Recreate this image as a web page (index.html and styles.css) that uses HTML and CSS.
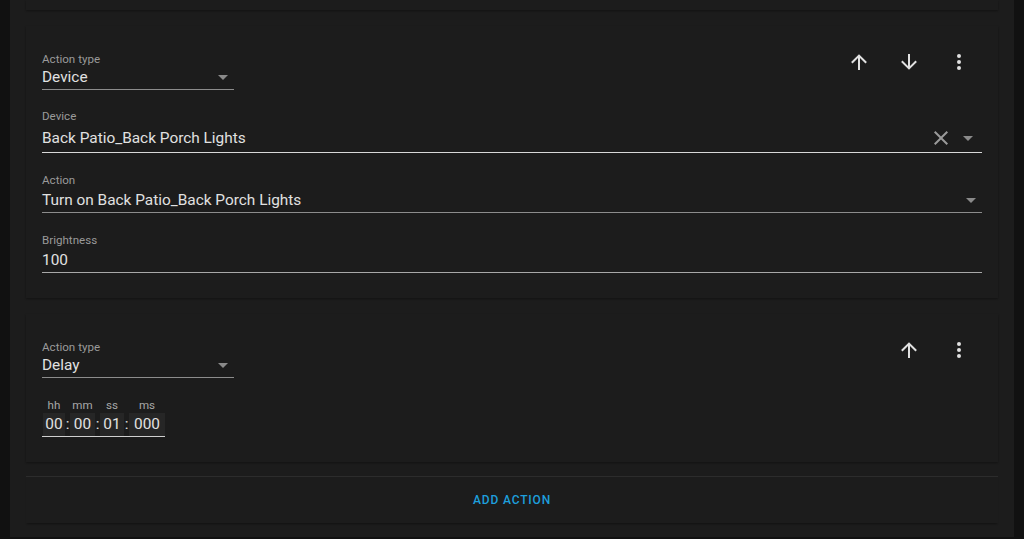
FILE: index.html
```html
<!DOCTYPE html>
<html lang="en">
<head>
    <meta charset="UTF-8">
    <meta name="viewport" content="width=device-width, initial-scale=1.0">
    <title>Actions</title>

    <link rel="stylesheet" href="styles.css">
</head>
<body>

    <div class="page">
        <div class="card stub"></div>

        <div class="card">
            <div class="card-head">
                <div class="field select">
                    <div class="label">Action type</div>
                    <div class="value">
                        <span>Device</span>
                        <svg class="caret" viewBox="0 0 24 24"><path d="M7,10L12,15L17,10H7Z"/></svg>
                    </div>
                </div>
                <div class="icons">
                    <button class="icon-btn"><svg viewBox="0 0 24 24"><path d="M13,20H11V8L5.5,13.5L4.08,12.08L12,4.16L19.92,12.08L18.5,13.5L13,8V20Z"/></svg></button>
                    <button class="icon-btn"><svg viewBox="0 0 24 24"><path d="M11,4H13V16L18.5,10.5L19.92,11.92L12,19.84L4.08,11.92L5.5,10.5L11,16V4Z"/></svg></button>
                    <button class="icon-btn"><svg viewBox="0 0 24 24"><path d="M12,16A2,2 0 0,1 14,18A2,2 0 0,1 12,20A2,2 0 0,1 10,18A2,2 0 0,1 12,16M12,10A2,2 0 0,1 14,12A2,2 0 0,1 12,14A2,2 0 0,1 10,12A2,2 0 0,1 12,10M12,4A2,2 0 0,1 14,6A2,2 0 0,1 12,8A2,2 0 0,1 10,6A2,2 0 0,1 12,4Z"/></svg></button>
                </div>
            </div>

            <div class="field combo">
                <div class="label">Device</div>
                <div class="value">
                    <span>Back Patio_Back Porch Lights</span>
                    <svg class="clear" viewBox="0 0 24 24"><path d="M19,6.41L17.59,5L12,10.59L6.41,5L5,6.41L10.59,12L5,17.59L6.41,19L12,13.41L17.59,19L19,17.59L13.41,12L19,6.41Z"/></svg>
                    <svg class="caret" viewBox="0 0 24 24"><path d="M7,10L12,15L17,10H7Z"/></svg>
                </div>
            </div>

            <div class="field">
                <div class="label">Action</div>
                <div class="value">
                    <span>Turn on Back Patio_Back Porch Lights</span>
                    <svg class="caret" viewBox="0 0 24 24"><path d="M7,10L12,15L17,10H7Z"/></svg>
                </div>
            </div>

            <div class="field plain">
                <div class="label">Brightness</div>
                <div class="value"><span>100</span></div>
            </div>
        </div>

        <div class="card">
            <div class="card-head">
                <div class="field select">
                    <div class="label">Action type</div>
                    <div class="value">
                        <span>Delay</span>
                        <svg class="caret" viewBox="0 0 24 24"><path d="M7,10L12,15L17,10H7Z"/></svg>
                    </div>
                </div>
                <div class="icons">
                    <button class="icon-btn"><svg viewBox="0 0 24 24"><path d="M13,20H11V8L5.5,13.5L4.08,12.08L12,4.16L19.92,12.08L18.5,13.5L13,8V20Z"/></svg></button>
                    <button class="icon-btn"><svg viewBox="0 0 24 24"><path d="M12,16A2,2 0 0,1 14,18A2,2 0 0,1 12,20A2,2 0 0,1 10,18A2,2 0 0,1 12,16M12,10A2,2 0 0,1 14,12A2,2 0 0,1 12,14A2,2 0 0,1 10,12A2,2 0 0,1 12,10M12,4A2,2 0 0,1 14,6A2,2 0 0,1 12,8A2,2 0 0,1 10,6A2,2 0 0,1 12,4Z"/></svg></button>
                </div>
            </div>

            <div class="timer">
                <div class="unit"><div class="unit-label">hh</div><div class="unit-box w22">00</div></div>
                <div class="colon">:</div>
                <div class="unit"><div class="unit-label">mm</div><div class="unit-box w25">00</div></div>
                <div class="colon">:</div>
                <div class="unit"><div class="unit-label">ss</div><div class="unit-box w24">01</div></div>
                <div class="colon">:</div>
                <div class="unit"><div class="unit-label">ms</div><div class="unit-box w36">000</div></div>
            </div>
        </div>

        <div class="add-bar">
            <button class="text-btn">Add action</button>
        </div>
    </div>

</body>
</html>
```

FILE: styles.css
```css
body {
    margin: 0;
    background: #111111;
    font-family: Roboto, "Noto Sans", sans-serif;
    color: #e1e1e1;
}
.page {
    margin-left: 10px;
    width: 1004px;
    box-sizing: border-box;
    padding: 0 16px 14px;
    background: #1c1c1c;
}
.card {
    background: #1c1c1c;
    margin-top: 16px;
    padding: 25px 16px;
    box-shadow: 0 1px 2px 0 rgba(0, 0, 0, .35);
}
.card.stub {
    margin-top: 0;
    padding: 0;
    height: 10px;
}
.card-head {
    display: flex;
    justify-content: space-between;
    align-items: flex-start;
}
.icons {
    display: flex;
    gap: 2px;
    margin-top: -13px;
    margin-right: -1px;
}
.icon-btn {
    width: 48px;
    height: 48px;
    padding: 12px;
    border: 0;
    background: none;
}
.icon-btn svg {
    width: 24px;
    height: 24px;
    fill: #e1e1e1;
    display: block;
}
.card-head + .field {
    margin-top: 18px;
}
.field + .field {
    margin-top: 19px;
}
.label {
    font-size: 11.6px;
    line-height: 16px;
    color: #9a9a9a;
}
.value {
    display: flex;
    align-items: center;
    font-size: 15.4px;
    line-height: 24px;
    border-bottom: 1px solid #8c8c8c;
}
.value span {
    flex: 1;
}
.caret {
    width: 24px;
    height: 24px;
    fill: #8a8a8a;
    margin-right: -1px;
}
.clear {
    width: 24px;
    height: 24px;
    fill: #9a9a9a;
    margin-right: 3px;
}
.select {
    width: 192px;
}
.select .label {
    margin-bottom: -2px;
}
.combo .label {
    margin-bottom: 2px;
}
.combo .value {
    padding-bottom: 2px;
    border-bottom-color: #d8d8d8;
}
.combo .caret {
    margin-right: 2px;
}
.plain .value {
    border-bottom-color: #a8a8a8;
}
.timer {
    display: flex;
    align-items: flex-end;
    width: 123px;
    margin-top: 19px;
    border-bottom: 1px solid #d0d0d0;
    padding-left: 1px;
    box-sizing: border-box;
}
.unit {
    display: flex;
    flex-direction: column;
    align-items: center;
}
.unit-label {
    font-size: 11.6px;
    line-height: 16px;
    color: #a8a8a8;
}
.unit-box {
    height: 23px;
    line-height: 23px;
    font-size: 15.4px;
    text-align: center;
    background: #262626;
}
.w22 { width: 22px; }
.w25 { width: 25px; }
.w24 { width: 24px; }
.w36 { width: 36px; }
.colon {
    width: 5px;
    font-size: 15.4px;
    line-height: 23px;
    text-align: center;
}
.add-bar {
    margin-top: 14px;
    border-top: 1px solid #2c2c2c;
    padding: 5px 16px;
    text-align: center;
    box-shadow: 0 2px 2px -1px rgba(0, 0, 0, .4);
}
.text-btn {
    height: 36px;
    border: 0;
    background: none;
    font-family: Roboto, "Noto Sans", sans-serif;
    font-size: 12px;
    font-weight: 500;
    letter-spacing: 0.85px;
    text-transform: uppercase;
    color: #1e9fdc;
}
```
